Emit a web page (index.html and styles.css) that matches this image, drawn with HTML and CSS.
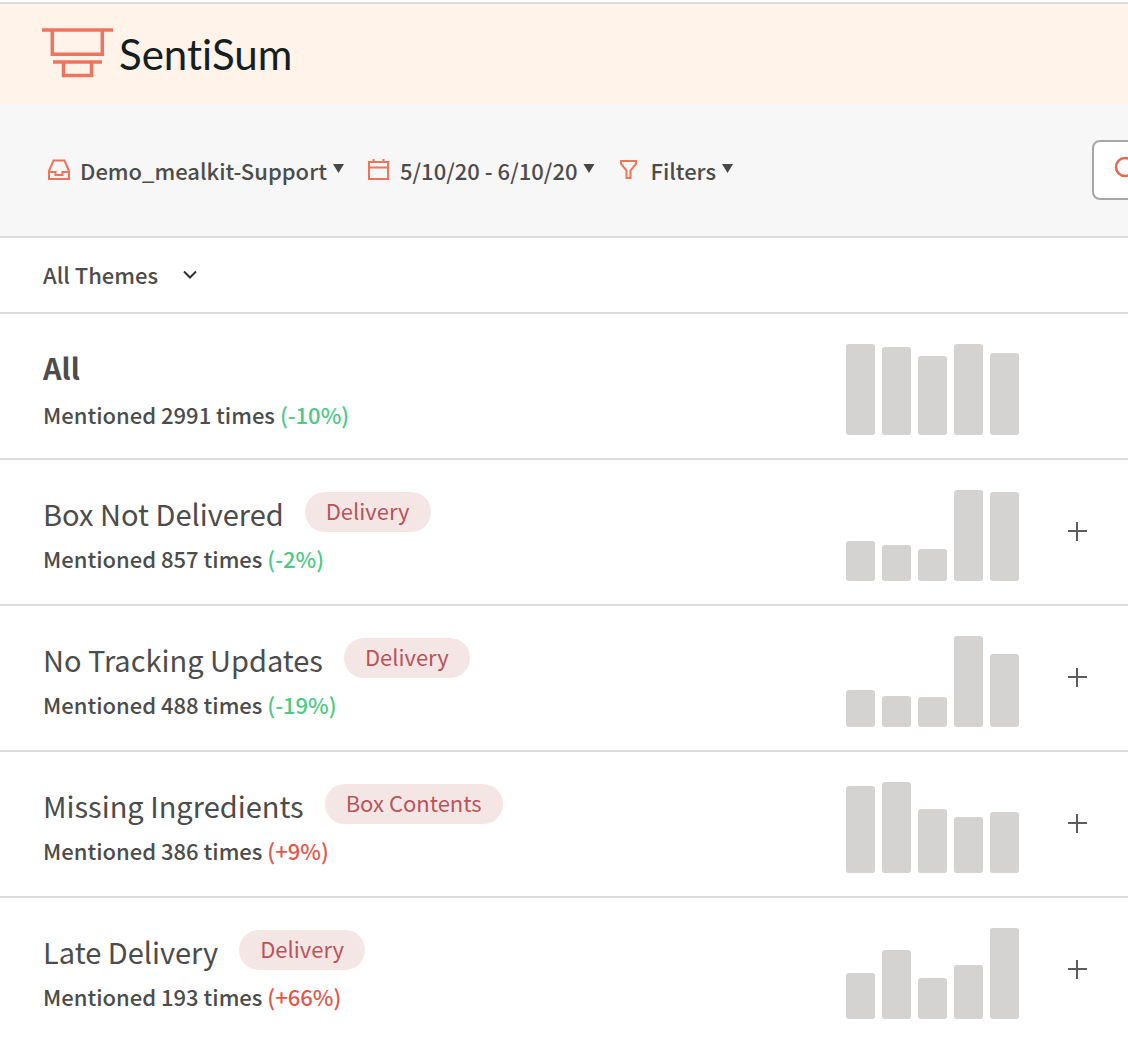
FILE: index.html
```html
<!DOCTYPE html>
<html lang="en">
<head>
    <meta charset="UTF-8">
    <meta name="viewport" content="width=device-width, initial-scale=1.0">
    <title>SentiSum</title>
    <link rel="stylesheet" href="styles.css">
</head>
<body>
    <header class="banner">
        <a class="logo" href="#">
            <svg class="logo-mark" width="72" height="52" viewBox="0 0 72 52" fill="none" stroke="#ee755d">
                <path d="M0 2h71M10.300 2v24.300h50V2M11 34h49M21.500 34v13.500h28V34" stroke-width="3.500"/>
            </svg>
            <span>SentiSum</span>
        </a>
    </header>

    <div class="toolbar">
        <div class="filters">
            <div class="filter">
                <svg width="24" height="24" viewBox="0 0 24 24" fill="none" stroke="#f0745a" stroke-width="2">
                    <path d="M2 13L6.500 2.500h11L22 13V21H2zM2 14h6.500v3h7v-3h6.500"/>
                </svg>
                <label class="picker">
                    <select aria-label="Data source">
                        <option>Demo_mealkit-Support</option>
                    </select>
                    <span class="caret"></span>
                </label>
            </div>
            <div class="filter">
                <svg width="24" height="24" viewBox="0 0 24 24" fill="none" stroke="#f0745a" stroke-width="2">
                    <path d="M2 4h19v17H2zM2 9.500h19M6.500 1v3M16.500 1v3"/>
                </svg>
                <button class="picker">5/10/20 - 6/10/20 <span class="caret"></span></button>
            </div>
            <div class="filter">
                <svg width="24" height="24" viewBox="0 0 24 24" fill="none" stroke="#f0745a" stroke-width="2">
                    <path d="M4 3h15v3l-5.500 6.500v7.500h-4v-7.500L4 6z"/>
                </svg>
                <button class="picker">Filters <span class="caret"></span></button>
            </div>
        </div>
        <label class="search">
            <svg width="28" height="28" viewBox="0 0 28 28" fill="none" stroke="#e8654f" stroke-width="2.500">
                <circle cx="11" cy="11" r="9"/>
                <path d="M17.500 17.500l8 8"/>
            </svg>
            <input type="search" aria-label="Search">
        </label>
    </div>

    <div class="themes">
        <label class="theme-picker">
            <select aria-label="Themes">
                <option>All Themes</option>
            </select>
            <svg width="14" height="9" viewBox="0 0 14 9" fill="none" stroke="#333" stroke-width="2">
                <path d="M1 1.500l6 6 6-6"/>
            </svg>
        </label>
    </div>

    <main>
        <section class="row row-total">
            <div class="info">
                <div class="heading"><h2>All</h2></div>
                <p>Mentioned 2991 times <span class="down">(-10%)</span></p>
            </div>
            <div class="chart">
                <i style="height: 91px"></i><i style="height: 88px"></i><i style="height: 79px"></i><i style="height: 91px"></i><i style="height: 82px"></i>
            </div>
        </section>

        <section class="row">
            <div class="info">
                <div class="heading"><h2>Box Not Delivered</h2><span class="tag">Delivery</span></div>
                <p>Mentioned 857 times <span class="down">(-2%)</span></p>
            </div>
            <div class="chart">
                <i style="height: 40px"></i><i style="height: 36px"></i><i style="height: 32px"></i><i style="height: 91px"></i><i style="height: 89px"></i>
            </div>
            <button class="expand" aria-label="Expand Box Not Delivered"></button>
        </section>

        <section class="row">
            <div class="info">
                <div class="heading"><h2>No Tracking Updates</h2><span class="tag">Delivery</span></div>
                <p>Mentioned 488 times <span class="down">(-19%)</span></p>
            </div>
            <div class="chart">
                <i style="height: 37px"></i><i style="height: 31px"></i><i style="height: 30px"></i><i style="height: 91px"></i><i style="height: 73px"></i>
            </div>
            <button class="expand" aria-label="Expand No Tracking Updates"></button>
        </section>

        <section class="row">
            <div class="info">
                <div class="heading"><h2>Missing Ingredients</h2><span class="tag">Box Contents</span></div>
                <p>Mentioned 386 times <span class="up">(+9%)</span></p>
            </div>
            <div class="chart">
                <i style="height: 87px"></i><i style="height: 91px"></i><i style="height: 64px"></i><i style="height: 56px"></i><i style="height: 61px"></i>
            </div>
            <button class="expand" aria-label="Expand Missing Ingredients"></button>
        </section>

        <section class="row">
            <div class="info">
                <div class="heading"><h2>Late Delivery</h2><span class="tag">Delivery</span></div>
                <p>Mentioned 193 times <span class="up">(+66%)</span></p>
            </div>
            <div class="chart">
                <i style="height: 46px"></i><i style="height: 69px"></i><i style="height: 41px"></i><i style="height: 54px"></i><i style="height: 91px"></i>
            </div>
            <button class="expand" aria-label="Expand Late Delivery"></button>
        </section>
    </main>
</body>
</html>
```
FILE: styles.css
```css
* {
    margin: 0;
    padding: 0;
    box-sizing: border-box;
}
body {
    padding-top: 2px;
    background-color: #fff;
    color: #4c4c4c;
    font-family: "Noto Sans CJK SC", "Noto Sans", sans-serif;
    font-size: 22px;
    font-weight: 500;
    line-height: 32px;
}
button, select, input {
    border: none;
    background: none;
    color: inherit;
    font: inherit;
    appearance: none;
    cursor: pointer;
}
svg {
    display: block;
    flex: none;
}

/* header */
.banner {
    height: 102px;
    padding: 24px 42px;
    border-top: 2px solid #dcdbe0;
    background-color: #fff3ea;
}
.logo {
    display: inline-flex;
    gap: 5px;
    color: #14201f;
    font-family: Lato, sans-serif;
    font-size: 42px;
    font-weight: 400;
    font-variant-ligatures: none;
    line-height: 52px;
    text-decoration: none;
}

/* toolbar */
.toolbar {
    display: grid;
    grid-template-columns: minmax(1048px, 1fr) 320px;
    align-items: center;
    padding: 36px 44px;
    border-bottom: 2px solid #dcdcdc;
    background-color: #f7f7f7;
    overflow: hidden;
}
.filters {
    display: flex;
    gap: 23px;
    padding-left: 3px;
}
.filter {
    display: flex;
    align-items: center;
    gap: 9px;
}
.picker {
    display: flex;
    gap: 6px;
    line-height: 32px;
}
.picker select {
    height: 32px;
}
.caret {
    margin-top: 10px;
    width: 11px;
    height: 9px;
    background-color: #484848;
    clip-path: polygon(0 0, 100% 0, 50% 100%);
}
.search {
    display: flex;
    height: 60px;
    padding: 14px 20px;
    border: 2px solid #a6a6a6;
    border-radius: 8px;
    background-color: #fff;
}
.search input {
    flex: 1;
    min-width: 0;
}

/* theme rows */
.themes {
    display: flex;
    align-items: center;
    height: 76px;
    padding: 0 43px 2px;
    border-bottom: 2px solid #dcdcdc;
}
.theme-picker {
    display: flex;
    align-items: center;
    gap: 24px;
}
.row {
    display: grid;
    grid-template-columns: 1fr 173px 42px;
    column-gap: 37px;
    padding: 30px 30px 23px 43px;
    border-bottom: 2px solid #dcdcdc;
}
.row:last-child {
    border-bottom: none;
}
.heading {
    display: flex;
    gap: 21px;
    height: 52px;
}
.row h2 {
    font-size: 29px;
    font-weight: 400;
    line-height: 46px;
}
.row-total h2 {
    font-weight: 700;
}
.row-total .heading {
    height: 54px;
}
.tag {
    height: 40px;
    margin-top: 2px;
    padding: 0 21px;
    border-radius: 20px;
    background-color: #f5e6e6;
    color: #b9545a;
    font-weight: 400;
    line-height: 36px;
}
.down {
    color: #4cc986;
}
.up {
    color: #e2574c;
}
.chart {
    display: flex;
    align-items: flex-end;
    gap: 7px;
    height: 91px;
}
.chart i {
    width: 29px;
    border-radius: 3px;
    background-color: #d5d3d2;
}
.expand {
    height: 42px;
    margin-top: 20px;
    background:
        linear-gradient(#5c5c5c, #5c5c5c) center / 19px 2px no-repeat,
        linear-gradient(#5c5c5c, #5c5c5c) center / 2px 19px no-repeat;
}
```
